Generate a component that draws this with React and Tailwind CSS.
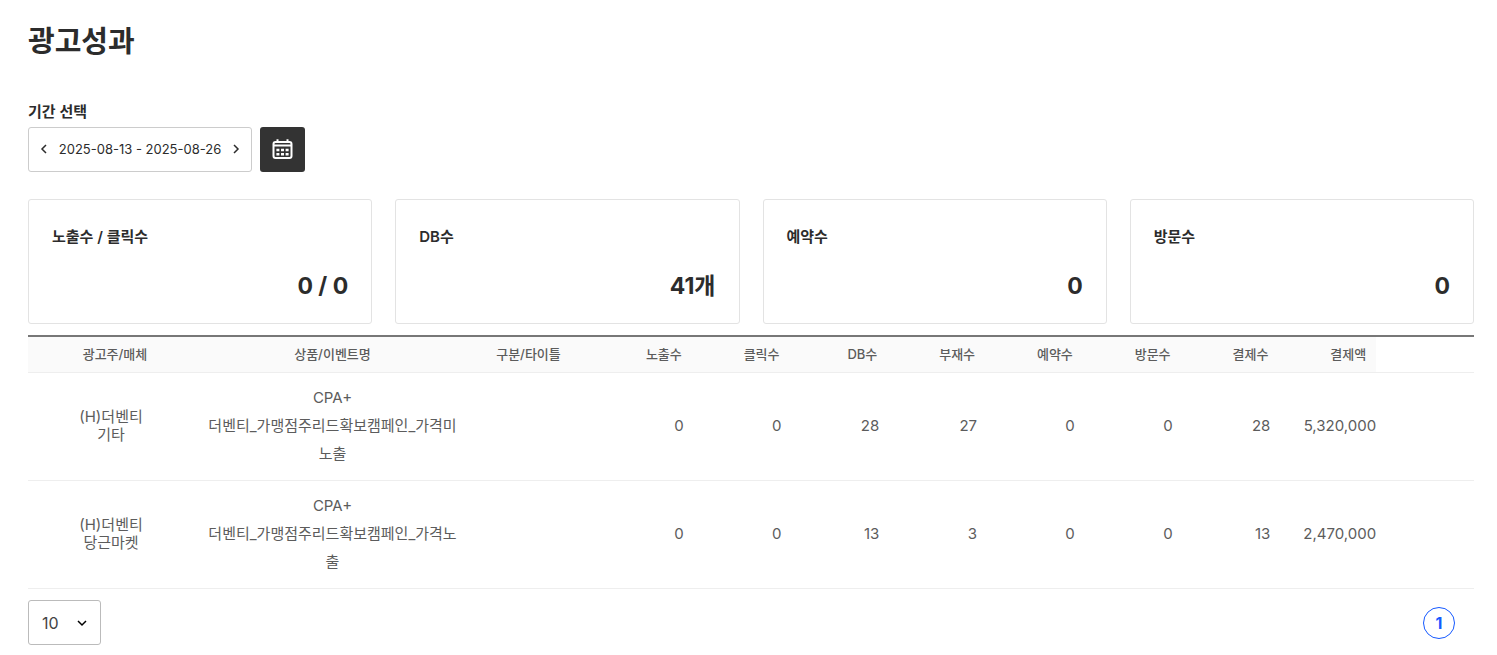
import React from 'react';

const summary = [
  { label: '노출수 / 클릭수', value: '0 / 0' },
  { label: 'DB수', value: '41개' },
  { label: '예약수', value: '0' },
  { label: '방문수', value: '0' },
];

const numberHeaders = ['노출수', '클릭수', 'DB수', '부재수', '예약수', '방문수', '결제수', '결제액'];

const rows = [
  {
    advertiser: '(H)더벤티',
    media: '기타',
    product: 'CPA+',
    event: '더벤티_가맹점주리드확보캠페인_가격미노출',
    numbers: ['0', '0', '28', '27', '0', '0', '28', '5,320,000'],
  },
  {
    advertiser: '(H)더벤티',
    media: '당근마켓',
    product: 'CPA+',
    event: '더벤티_가맹점주리드확보캠페인_가격노출',
    numbers: ['0', '0', '13', '3', '0', '0', '13', '2,470,000'],
  },
];

function Chevron({ d }) {
  return (
    <svg width="12" height="12" viewBox="0 0 12 12" fill="none" stroke="currentColor" strokeWidth="1.5" aria-hidden="true">
      <path d={d} />
    </svg>
  );
}

function CalendarIcon() {
  return (
    <svg width="21" height="21" viewBox="0 0 21 21" fill="none" stroke="currentColor" strokeWidth="2" aria-hidden="true">
      <rect x="1.5" y="3" width="18" height="16" rx="2" />
      <path d="M1.5 6.5h18M5.5 0.2v3M15.5 0.2v3" />
      <path d="M4.4 11h3M9 11h3M13.6 11h3M4.4 15.2h3M9 15.2h3M13.6 15.2h3" strokeWidth="2.6" />
    </svg>
  );
}

function App() {
  return (
    <main className="pl-7 pr-[23px] pt-[22px] pb-2 bg-white text-[#2c2c2c] font-['Inter','Noto_Sans_CJK_KR',sans-serif]">
      <h1 className="text-[29px] leading-10 font-bold">광고성과</h1>

      <section className="mt-[39px]">
        <h2 className="text-[15px] leading-[22px] font-semibold">기간 선택</h2>
        <div className="mt-1 flex gap-2">
          <div className="flex items-center justify-between w-56 h-[45px] px-[9px] pb-px border border-[#ccc] rounded-[3px]">
            <button type="button" aria-label="이전 기간">
              <Chevron d="M8 2L4 6l4 4" />
            </button>
            <span className="text-[13px] leading-5 whitespace-nowrap">2025-08-13 - 2025-08-26</span>
            <button type="button" aria-label="다음 기간">
              <Chevron d="M4 2l4 4-4 4" />
            </button>
          </div>
          <button type="button" aria-label="달력" className="flex items-center justify-center w-[45px] h-[45px] rounded-[3px] bg-[#333] text-white">
            <CalendarIcon />
          </button>
        </div>
      </section>

      <section className="mt-[27px] grid grid-cols-4 gap-[23px]">
        {summary.map((item) => (
          <div key={item.label} className="h-[125px] px-[23px] pt-[25px] border border-[#e3e3e3] rounded-[3px]">
            <h3 className="text-[15px] leading-6 font-semibold">{item.label}</h3>
            <p className="mt-[21px] text-[23px] leading-8 font-bold text-right">{item.value}</p>
          </div>
        ))}
      </section>

      <table className="mt-[11px] w-full table-fixed border-separate border-spacing-0 text-[#5c5c5c]">
        <colgroup>
          <col className="w-[174px]" />
          <col className="w-[261px]" />
          <col className="w-[131px]" />
          <col span="9" />
        </colgroup>
        <thead>
          <tr className="text-[13px] leading-[34px] *:pb-px *:border-t-2 *:border-t-[#777] *:border-b *:border-b-[#eee]">
            <th className="bg-[#fafafa] font-medium">광고주/매체</th>
            <th className="bg-[#fafafa] font-medium">상품/이벤트명</th>
            <th className="bg-[#fafafa] font-medium">구분/타이틀</th>
            {numberHeaders.map((header) => (
              <th key={header} className="bg-[#fafafa] font-medium text-right pr-2.5">{header}</th>
            ))}
            <td></td>
          </tr>
        </thead>
        <tbody>
          {rows.map((row) => (
            <tr key={row.event} className="text-[15px] leading-7 *:pt-[11px] *:pb-3 *:border-b *:border-[#eee]">
              <td className="pr-2 text-center leading-[18px]">
                {row.advertiser}
                <br />
                {row.media}
              </td>
              <td className="px-1 text-center">
                {row.product}
                <br />
                {row.event}
              </td>
              <td></td>
              {row.numbers.map((number, i) => (
                <td key={i} className="pr-2 text-right nth-[11]:pr-0">{number}</td>
              ))}
              <td></td>
            </tr>
          ))}
        </tbody>
      </table>

      <footer className="mt-[11px] flex items-center justify-between">
        <div className="relative text-[#444]">
          <select aria-label="페이지당 개수" defaultValue="10" className="block appearance-none w-[73px] h-[45px] pl-[13px] text-base bg-white border border-[#bbb] rounded-[3px]">
            <option>10</option>
            <option>50</option>
            <option>100</option>
          </select>
          <span className="absolute inset-y-0 right-[13px] flex items-center text-black pointer-events-none">
            <Chevron d="M2 4l4 4 4-4" />
          </span>
        </div>
        <nav className="pr-[19px]">
          <a href="#1" className="flex items-center justify-center size-8 rounded-full border border-[#1559ff] text-base font-bold text-[#1559ff]">1</a>
        </nav>
      </footer>
    </main>
  );
}

export default App;
